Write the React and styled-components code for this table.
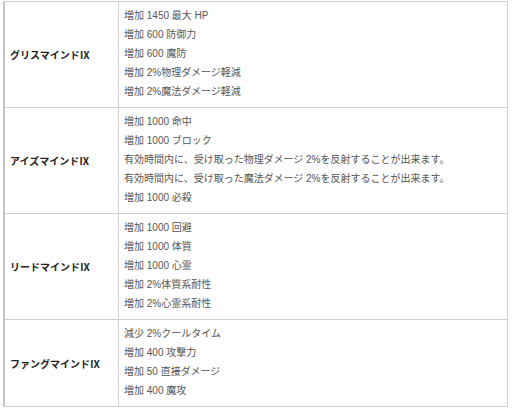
import React from 'react';
import styled, { createGlobalStyle } from 'styled-components';

const GlobalStyle = createGlobalStyle`
  body {
    margin: 0;
    background: #fff;
    font-family: 'Liberation Sans', 'Noto Sans CJK JP', sans-serif;
  }
`;

const Page = styled.div`
  padding: 1px 0 0 3px;
`;

const Table = styled.table`
  width: 505px;
  border-collapse: collapse;
  font-size: 10px;
  color: #555;
`;

const Row = styled.tr`
  border-top: 1px solid #cfcfcf;
  border-bottom: 1px solid #cfcfcf;
`;

const Label = styled.td`
  width: 104px;
  padding: 0 4px 0 5px;
  border-left: 2px solid #c4c4c4;
  border-right: 1px solid #cfcfcf;
  font-weight: bold;
  color: #222;
  vertical-align: middle;
  white-space: nowrap;
`;

const Effects = styled.td`
  padding: 5px 5px;
  border-right: 1px solid #cfcfcf;
  vertical-align: top;
`;

const Line = styled.div`
  height: 19px;
  line-height: 18px;
  white-space: nowrap;
`;

const minds = [
  {
    name: 'グリスマインドⅨ',
    effects: ['増加 1450 最大 HP', '増加 600 防御力', '増加 600 魔防', '増加 2%物理ダメージ軽減', '増加 2%魔法ダメージ軽減'],
  },
  {
    name: 'アイズマインドⅨ',
    effects: [
      '増加 1000 命中',
      '増加 1000 ブロック',
      '有効時間内に、受け取った物理ダメージ 2%を反射することが出来ます。',
      '有効時間内に、受け取った魔法ダメージ 2%を反射することが出来ます。',
      '増加 1000 必殺',
    ],
  },
  {
    name: 'リードマインドⅨ',
    effects: ['増加 1000 回避', '増加 1000 体質', '増加 1000 心霊', '増加 2%体質系耐性', '増加 2%心霊系耐性'],
  },
  {
    name: 'ファングマインドⅨ',
    effects: ['減少 2%クールタイム', '増加 400 攻撃力', '増加 50 直接ダメージ', '増加 400 魔攻'],
  },
];

export default function App() {
  return (
    <Page>
      <GlobalStyle />
      <Table>
        <tbody>
          {minds.map(m => (
            <Row key={m.name}>
              <Label>{m.name}</Label>
              <Effects>
                {m.effects.map(e => <Line key={e}>{e}</Line>)}
              </Effects>
            </Row>
          ))}
        </tbody>
      </Table>
    </Page>
  );
}
